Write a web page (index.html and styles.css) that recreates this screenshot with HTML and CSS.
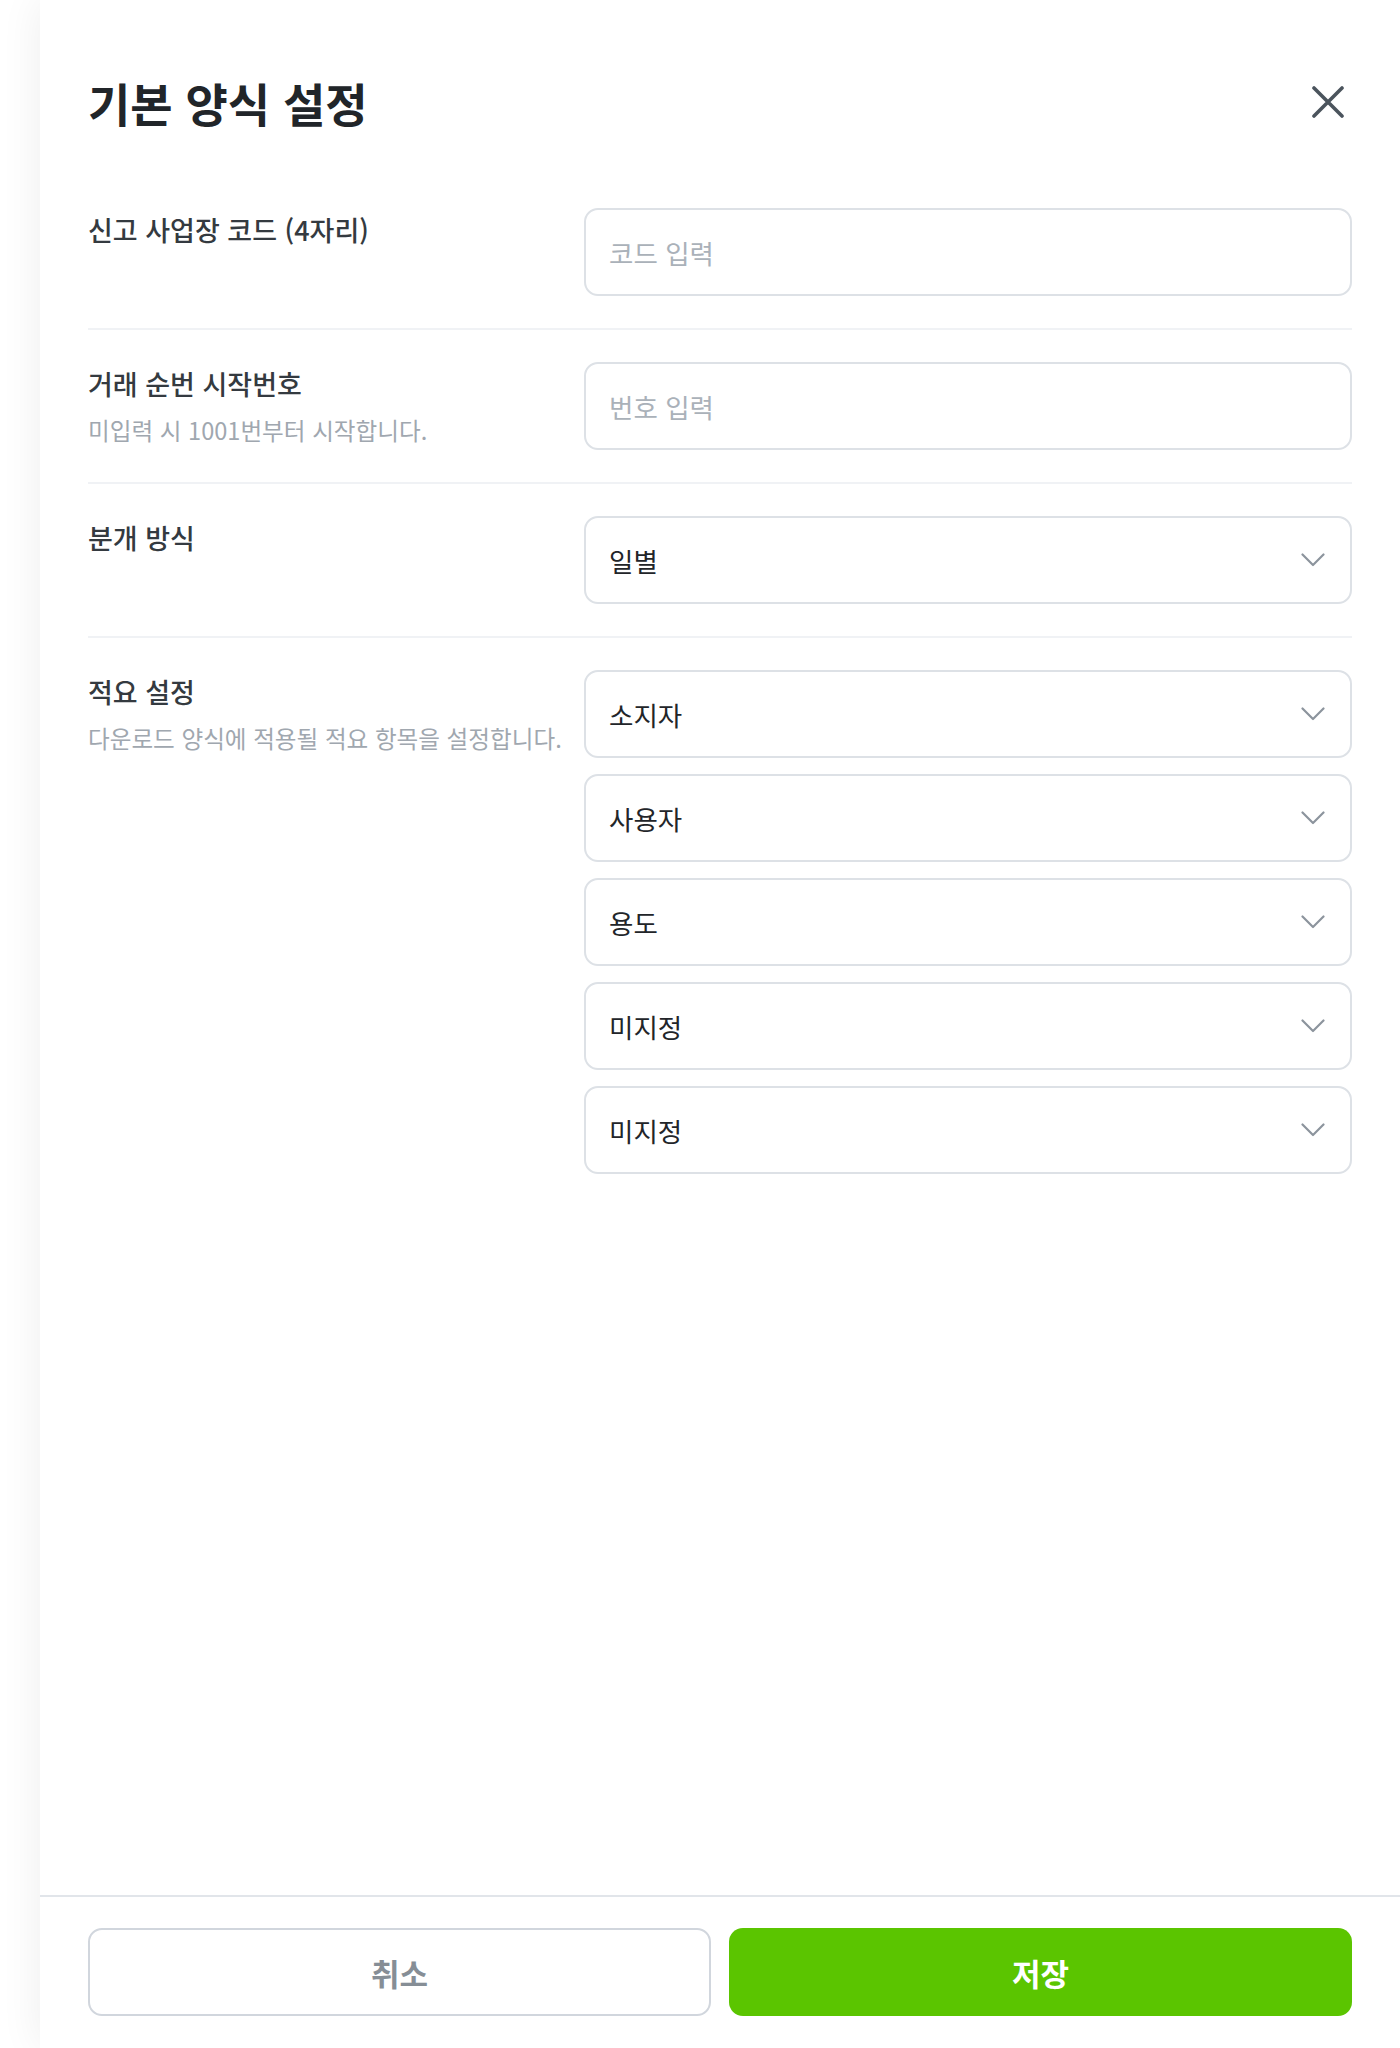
FILE: index.html
```html
<!DOCTYPE html>
<html lang="ko">
<head>
<meta charset="utf-8">
<title>기본 양식 설정</title>
<link rel="stylesheet" href="styles.css">
</head>
<body>
<div class="panel">
  <div class="body">
    <header class="header">
      <h1 class="title">기본 양식 설정</h1>
      <button class="close" type="button" aria-label="닫기">
        <svg width="32" height="32" viewBox="0 0 32 32"><path d="M2 2 L30 30 M30 2 L2 30" stroke="#4b545d" stroke-width="3.6" stroke-linecap="round" fill="none"/></svg>
      </button>
    </header>

    <div class="row">
      <div class="label-col">
        <div class="label">신고 사업장 코드 (4자리)</div>
      </div>
      <div class="field-col">
        <input class="input" type="text" placeholder="코드 입력">
      </div>
    </div>

    <div class="row">
      <div class="label-col">
        <div class="label">거래 순번 시작번호</div>
        <div class="sub">미입력 시 1001번부터 시작합니다.</div>
      </div>
      <div class="field-col">
        <input class="input" type="text" placeholder="번호 입력">
      </div>
    </div>

    <div class="row">
      <div class="label-col">
        <div class="label">분개 방식</div>
      </div>
      <div class="field-col">
        <div class="select"><span>일별</span><svg class="chev" width="24" height="14" viewBox="0 0 24 14"><path d="M1.5 1.5 L12 12 L22.5 1.5" stroke="#8c949d" stroke-width="2.2" fill="none" stroke-linecap="round" stroke-linejoin="round"/></svg></div>
      </div>
    </div>

    <div class="row last">
      <div class="label-col">
        <div class="label">적요 설정</div>
        <div class="sub">다운로드 양식에 적용될 적요 항목을 설정합니다.</div>
      </div>
      <div class="field-col stack">
        <div class="select"><span>소지자</span><svg class="chev" width="24" height="14" viewBox="0 0 24 14"><path d="M1.5 1.5 L12 12 L22.5 1.5" stroke="#8c949d" stroke-width="2.2" fill="none" stroke-linecap="round" stroke-linejoin="round"/></svg></div>
        <div class="select"><span>사용자</span><svg class="chev" width="24" height="14" viewBox="0 0 24 14"><path d="M1.5 1.5 L12 12 L22.5 1.5" stroke="#8c949d" stroke-width="2.2" fill="none" stroke-linecap="round" stroke-linejoin="round"/></svg></div>
        <div class="select"><span>용도</span><svg class="chev" width="24" height="14" viewBox="0 0 24 14"><path d="M1.5 1.5 L12 12 L22.5 1.5" stroke="#8c949d" stroke-width="2.2" fill="none" stroke-linecap="round" stroke-linejoin="round"/></svg></div>
        <div class="select"><span>미지정</span><svg class="chev" width="24" height="14" viewBox="0 0 24 14"><path d="M1.5 1.5 L12 12 L22.5 1.5" stroke="#8c949d" stroke-width="2.2" fill="none" stroke-linecap="round" stroke-linejoin="round"/></svg></div>
        <div class="select"><span>미지정</span><svg class="chev" width="24" height="14" viewBox="0 0 24 14"><path d="M1.5 1.5 L12 12 L22.5 1.5" stroke="#8c949d" stroke-width="2.2" fill="none" stroke-linecap="round" stroke-linejoin="round"/></svg></div>
      </div>
    </div>
  </div>

  <footer class="footer">
    <button class="btn cancel" type="button">취소</button>
    <button class="btn save" type="button">저장</button>
  </footer>
</div>
</body>
</html>
```

FILE: styles.css
```css
* { box-sizing: border-box; }

html, body {
  margin: 0;
  padding: 0;
  background: #ffffff;
}

body {
  font-family: "Noto Sans CJK KR", "Noto Sans", sans-serif;
  color: #222529;
  display: flex;
  justify-content: flex-end;
  height: 2048px;
  overflow: hidden;
}

.panel {
  width: 1360px;
  height: 2048px;
  background: #ffffff;
  box-shadow: 0 0 40px rgba(0, 0, 0, 0.07);
  display: flex;
  flex-direction: column;
}

.body {
  flex: 1;
  padding: 0 48px;
}

.header {
  display: flex;
  justify-content: space-between;
  align-items: center;
  padding: 72px 0 44px;
}

.title {
  margin: 0;
  font-size: 46px;
  line-height: 60px;
  font-weight: 700;
  letter-spacing: 0;
  color: #212529;
}

.close {
  width: 48px;
  height: 48px;
  border: 0;
  background: none;
  padding: 0;
  display: flex;
  align-items: center;
  justify-content: center;
  cursor: pointer;
}

.row {
  display: grid;
  grid-template-columns: 496px 1fr;
  padding: 32px 0;
  border-bottom: 2px solid #f0f2f5;
}

.row.last {
  border-bottom: 0;
}

.label-col {
  padding-top: 4px;
}

.label {
  font-size: 27px;
  line-height: 36px;
  font-weight: 500;
  color: #343a40;
}

.sub {
  margin-top: 13px;
  font-size: 23.6px;
  line-height: 30px;
  color: #a0a7af;
}

.field-col.stack {
  display: flex;
  flex-direction: column;
  gap: 16px;
}

.input,
.select {
  width: 100%;
  height: 88px;
  border: 2px solid #dde1e6;
  border-radius: 14px;
  background: #ffffff;
  font-family: inherit;
  font-size: 26.5px;
  color: #222529;
  padding: 0 25px 0 23px;
}

.input {
  outline: none;
  display: block;
}

.input::placeholder {
  color: #aab1b9;
}

.select {
  display: flex;
  align-items: center;
  justify-content: space-between;
}

.chev {
  display: block;
}

.footer {
  border-top: 2px solid #e1e5ea;
  padding: 31px 48px 32px;
  display: grid;
  grid-template-columns: 1fr 1fr;
  gap: 18px;
}

.btn {
  height: 88px;
  border-radius: 14px;
  font-family: inherit;
  font-size: 31px;
  font-weight: 700;
  cursor: pointer;
}

.cancel {
  background: #ffffff;
  border: 2px solid #d1d6dd;
  color: #868e96;
}

.save {
  background: #5bc500;
  border: 0;
  color: #ffffff;
}
```
